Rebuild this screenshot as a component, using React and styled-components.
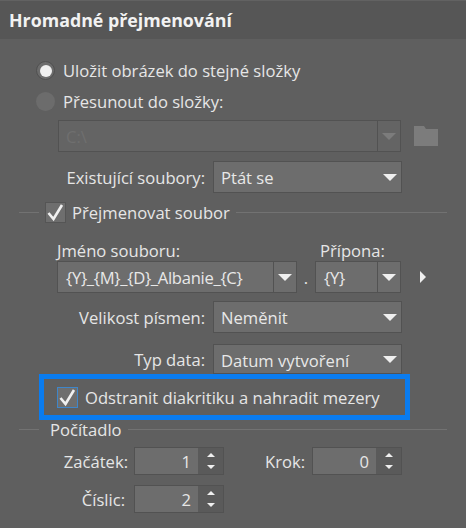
import styled, { createGlobalStyle } from "styled-components";

const Global = createGlobalStyle`
  html, body { margin: 0; padding: 0; background: #5f5f5f; }
  * { box-sizing: border-box; }
`;

const Panel = styled.div`
  width: 466px;
  height: 528px;
  overflow: hidden;
  background: #5f5f5f;
  color: #e6e6e6;
  font-family: "Open Sans", "Noto Sans", sans-serif;
  font-size: 16.6px;
`;

const Title = styled.div`
  height: 39px;
  padding-left: 9px;
  display: flex;
  align-items: center;
  background: #565656;
  border-top: 1px solid #626262;
  color: #f2f2f2;
  font-size: 17.8px;
  font-weight: 700;
`;

const Body = styled.div`
  padding-top: 16px;
  display: flex;
  flex-direction: column;
`;

const RadioRow = styled.div`
  height: 31px;
  padding-left: 36px;
  display: flex;
  align-items: center;
  gap: 8px;
`;

const Radio = styled.span`
  width: 19px;
  height: 19px;
  border-radius: 50%;
  background: #6c6c6c;
  border: ${({ $on }) => ($on ? "1px solid #505050" : "none")};
  display: flex;
  align-items: center;
  justify-content: center;
  &::after {
    content: "";
    display: ${({ $on }) => ($on ? "block" : "none")};
    width: 12px;
    height: 12px;
    border-radius: 50%;
    background: #efefef;
  }
`;

const Field = styled.div`
  height: ${({ $h }) => $h || 32}px;
  width: ${({ $w }) => $w}px;
  flex: none;
  display: flex;
  background: ${({ $off }) => ($off ? "#646464" : "#6d6d6d")};
  border: 1px solid #525252;
  color: ${({ $off }) => ($off ? "#6f6f6f" : "#e8e8e8")};
`;

const FieldText = styled.div`
  flex: 1;
  padding-left: ${({ $tight }) => ($tight ? 8 : 7)}px;
  letter-spacing: ${({ $tight }) => ($tight ? "-0.3px" : "normal")};
  line-height: 32px;
  white-space: nowrap;
  overflow: hidden;
`;

const Drop = styled.div`
  width: 23px;
  flex: none;
  display: flex;
  align-items: center;
  justify-content: center;
  border-left: ${({ $split }) => ($split ? "1px solid #525252" : "none")};
  &::after {
    content: "";
    border-left: 7px solid transparent;
    border-right: 7px solid transparent;
    border-top: 7px solid ${({ $off }) => ($off ? "#7c7c7c" : "#efefef")};
  }
`;

const PathRow = styled.div`
  margin: 3px 0 0 58px;
  display: flex;
  align-items: center;
  gap: 13px;
`;

const FormRow = styled.div`
  width: 402px;
  margin-top: ${({ $top }) => $top || 0}px;
  display: flex;
  justify-content: flex-end;
  align-items: center;
  gap: 8px;
`;

const GroupHead = styled.div`
  width: 428px;
  height: ${({ $h }) => $h || 20}px;
  margin: ${({ $top }) => $top || 0}px 0 0 19px;
  display: flex;
  align-items: center;
  gap: 6px;
  &::after {
    content: "";
    flex: 1;
    height: 1px;
    background: #727272;
  }
`;

const GroupLead = styled.span`
  width: 20px;
  height: 1px;
  margin-right: ${({ $gap }) => $gap || 0}px;
  background: #727272;
`;

const Check = styled.span`
  width: 21px;
  height: 21px;
  flex: none;
  display: flex;
  align-items: center;
  justify-content: center;
  background: #6e6e6e;
  border: 1px solid ${({ $blue }) => ($blue ? "#3f86c9" : "#555555")};
`;

const Labels = styled.div`
  margin: 19px 0 0 57px;
  height: 18px;
  width: 344px;
  display: flex;
  justify-content: space-between;
  align-items: center;
`;

const ExtLabel = styled.span`
  width: 81px;
`;

const NameRow = styled.div`
  margin: 2px 0 0 57px;
  display: flex;
  align-items: center;
`;

const Dot = styled.span`
  width: 18px;
  text-align: center;
`;

const More = styled.span`
  margin-left: 19px;
  border-top: 6px solid transparent;
  border-bottom: 6px solid transparent;
  border-left: 6px solid #efefef;
`;

const Highlight = styled.div`
  width: 371px;
  height: 46px;
  margin-left: 39px;
  padding-left: 13px;
  display: flex;
  align-items: center;
  gap: 7px;
  border: 5px solid #0a7cf0;
  white-space: nowrap;
`;

const SpinRow = styled.div`
  width: 402px;
  margin-top: ${({ $top }) => $top || 0}px;
  display: grid;
  grid-template-columns: 128px 90px 76px 90px;
  column-gap: 6px;
  align-items: center;
`;

const SpinLabel = styled.span`
  text-align: right;
  padding-right: ${({ $pad }) => $pad || 0}px;
`;

const Spin = styled.div`
  height: 28px;
  display: flex;
  background: #5a5a5a;
  border: 1px solid #525252;
`;

const SpinValue = styled.div`
  flex: 1;
  padding-right: 7px;
  text-align: right;
  line-height: 27px;
  background: #6d6d6d;
`;

const Steps = styled.div`
  width: 25px;
  display: flex;
  flex-direction: column;
  align-items: center;
  justify-content: center;
  gap: 8px;
`;

const Step = styled.span`
  border-left: 4px solid transparent;
  border-right: 4px solid transparent;
  border-${({ $up }) => ($up ? "bottom" : "top")}: 4px solid #efefef;
`;

const Tick = () => (
  <svg width="19" height="19" viewBox="0 0 19 19">
    <path d="M2.5 10 L7.5 16 L16 2" fill="none" stroke="#f0f0f0" strokeWidth="2.6" />
  </svg>
);

const Folder = () => (
  <svg width="24" height="20" viewBox="0 0 24 20">
    <path d="M0 0H10L12 3H24V20H0Z" fill="#7c7c7c" />
  </svg>
);

const Spinner = ({ value }) => (
  <Spin>
    <SpinValue>{value}</SpinValue>
    <Steps>
      <Step $up />
      <Step />
    </Steps>
  </Spin>
);

export default function App() {
  return (
    <Panel>
      <Global />
      <Title>Hromadné přejmenování</Title>
      <Body>
        <RadioRow>
          <Radio $on />
          Uložit obrázek do stejné složky
        </RadioRow>
        <RadioRow>
          <Radio />
          Přesunout do složky:
        </RadioRow>
        <PathRow>
          <Field $w={343} $off>
            <FieldText>C:\</FieldText>
            <Drop $split $off />
          </Field>
          <Folder />
        </PathRow>
        <FormRow $top={9}>
          Existující soubory:
          <Field $w={189}>
            <FieldText>Ptát se</FieldText>
            <Drop />
          </Field>
        </FormRow>
        <GroupHead $top={9}>
          <GroupLead />
          <Check>
            <Tick />
          </Check>
          Přejmenovat soubor
        </GroupHead>
        <Labels>
          <span>Jméno souboru:</span>
          <ExtLabel>Přípona:</ExtLabel>
        </Labels>
        <NameRow>
          <Field $w={240}>
            <FieldText $tight>{"{Y}_{M}_{D}_Albanie_{C}"}</FieldText>
            <Drop $split />
          </Field>
          <Dot>.</Dot>
          <Field $w={86}>
            <FieldText $tight>{"{Y}"}</FieldText>
            <Drop $split />
          </Field>
          <More />
        </NameRow>
        <FormRow $top={8}>
          Velikost písmen:
          <Field $w={189}>
            <FieldText>Neměnit</FieldText>
            <Drop />
          </Field>
        </FormRow>
        <FormRow $top={11}>
          Typ data:
          <Field $w={189} $h={30}>
            <FieldText>Datum vytvoření</FieldText>
            <Drop />
          </Field>
        </FormRow>
        <Highlight>
          <Check $blue>
            <Tick />
          </Check>
          Odstranit diakritiku a nahradit mezery
        </Highlight>
        <GroupHead $h={19}>
          <GroupLead $gap={5} />
          Počítadlo
        </GroupHead>
        <SpinRow $top={8}>
          <SpinLabel>Začátek:</SpinLabel>
          <Spinner value="1" />
          <SpinLabel $pad={1}>Krok:</SpinLabel>
          <Spinner value="0" />
        </SpinRow>
        <SpinRow $top={10}>
          <SpinLabel $pad={3}>Číslic:</SpinLabel>
          <Spinner value="2" />
        </SpinRow>
      </Body>
    </Panel>
  );
}
